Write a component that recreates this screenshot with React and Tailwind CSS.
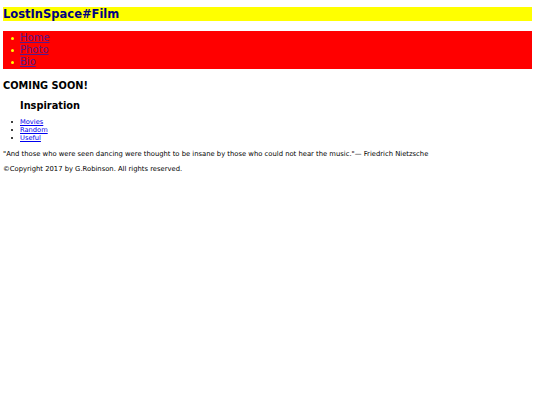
import React from "react";

const navLinks = ["Home", "Photo", "Bio"];
const inspirationLinks = ["Movies", "Random", "Useful"];

const App = () => {
  return (
    <div className="min-h-[405px] bg-white px-[3px] pt-[7px] font-['DejaVu_Sans',Verdana,sans-serif] text-black">
      {/* header */}
      <div className="h-[14px] w-[529px] bg-[#ffff00]">
        <h1 className="text-[11.5px] font-bold leading-[14px] text-[#000080]">
          LostInSpace#Film
        </h1>
      </div>

      {/* nav */}
      <ul className="mt-[10px] w-[529px] bg-[#ff0000] py-[1px]">
        {navLinks.map((link) => (
          <li key={link} className="flex h-[12px] items-center text-[10px] leading-[12px]">
            <span className="ml-[8px] mr-[6px] h-[3px] w-[3px] rounded-full bg-[#ffff00]" />
            <a href="#" className="text-[#551a8b] underline">
              {link}
            </a>
          </li>
        ))}
      </ul>

      <h2 className="mt-[10px] text-[9.8px] font-bold leading-[14px]">COMING SOON!</h2>

      <h3 className="mt-[6px] pl-[17px] text-[9.8px] font-bold leading-[14px]">Inspiration</h3>

      <ul className="mt-[5px]">
        {inspirationLinks.map((link) => (
          <li key={link} className="flex h-[8px] items-center text-[6.7px] leading-[8px]">
            <span className="ml-[8px] mr-[7px] h-[2px] w-[2px] rounded-full bg-black" />
            <a href="#" className="text-[#0000ee] underline">
              {link}
            </a>
          </li>
        ))}
      </ul>

      <p className="mt-[8px] text-[6.8px] leading-[9px]">
        "And those who were seen dancing were thought to be insane by those who could not hear the music."— Friedrich Nietzsche
      </p>

      <p className="mt-[6px] text-[6.8px] leading-[9px]">
        ©Copyright 2017 by G.Robinson. All rights reserved.
      </p>
    </div>
  );
};

export default App;
